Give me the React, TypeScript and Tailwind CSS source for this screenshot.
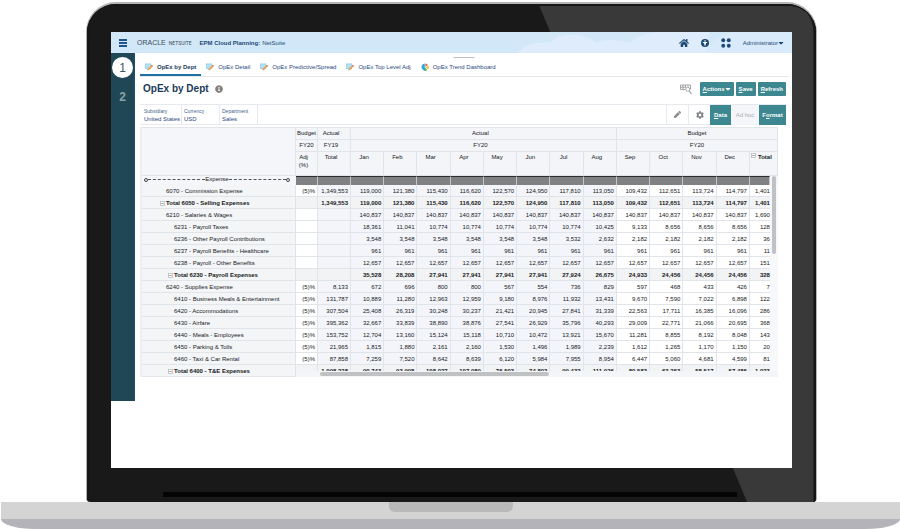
import { useState } from 'react';
import { FaHome, FaCog, FaPen, FaInfoCircle, FaCaretDown } from 'react-icons/fa';

const months = ['Jan', 'Feb', 'Mar', 'Apr', 'May', 'Jun', 'Jul', 'Aug', 'Sep', 'Oct', 'Nov', 'Dec'];

type Row = { label: string; level: number; total?: boolean; adj?: boolean; fy19?: string; values: string };

const rows: Row[] = [
  { label: '6070 - Commission Expense', level: 1, adj: true, fy19: '1,349,553', values: '119,000 121,380 115,430 116,620 122,570 124,950 117,810 113,050 109,432 112,651 113,724 114,797 1,401' },
  { label: 'Total 6050 - Selling Expenses', level: 1, total: true, fy19: '1,349,553', values: '119,000 121,380 115,430 116,620 122,570 124,950 117,810 113,050 109,432 112,651 113,724 114,797 1,401' },
  { label: '6210 - Salaries & Wages', level: 1, values: '140,837 140,837 140,837 140,837 140,837 140,837 140,837 140,837 140,837 140,837 140,837 140,837 1,690' },
  { label: '6231 - Payroll Taxes', level: 2, values: '18,361 11,041 10,774 10,774 10,774 10,774 10,774 10,425 9,133 8,656 8,656 8,656 128' },
  { label: '6236 - Other Payroll Contributions', level: 2, values: '3,548 3,548 3,548 3,548 3,548 3,548 3,532 2,632 2,182 2,182 2,182 2,182 36' },
  { label: '6237 - Payroll Benefits - Healthcare', level: 2, values: '961 961 961 961 961 961 961 961 961 961 961 961 11' },
  { label: '6238 - Payroll - Other Benefits', level: 2, values: '12,657 12,657 12,657 12,657 12,657 12,657 12,657 12,657 12,657 12,657 12,657 12,657 151' },
  { label: 'Total 6230 - Payroll Expenses', level: 2, total: true, values: '35,528 28,208 27,941 27,941 27,941 27,941 27,924 26,675 24,933 24,456 24,456 24,456 328' },
  { label: '6240 - Supplies Expense', level: 1, adj: true, fy19: '8,133', values: '672 696 800 800 567 554 736 829 597 468 433 426 7' },
  { label: '6410 - Business Meals & Entertainment', level: 2, adj: true, fy19: '131,787', values: '10,889 11,280 12,963 12,959 9,180 8,976 11,932 13,431 9,670 7,590 7,022 6,898 122' },
  { label: '6420 - Accommodations', level: 2, adj: true, fy19: '307,504', values: '25,408 26,319 30,248 30,237 21,421 20,945 27,841 31,339 22,563 17,711 16,385 16,096 286' },
  { label: '6430 - Airfare', level: 2, adj: true, fy19: '395,362', values: '32,667 33,839 38,890 38,876 27,541 26,929 35,796 40,293 29,009 22,771 21,066 20,695 368' },
  { label: '6440 - Meals - Employees', level: 2, adj: true, fy19: '153,752', values: '12,704 13,160 15,124 15,118 10,710 10,472 13,921 15,670 11,281 8,855 8,192 8,048 143' },
  { label: '6450 - Parking & Tolls', level: 2, adj: true, fy19: '21,965', values: '1,815 1,880 2,161 2,160 1,530 1,496 1,989 2,239 1,612 1,265 1,170 1,150 20' },
  { label: '6460 - Taxi & Car Rental', level: 2, adj: true, fy19: '87,858', values: '7,259 7,520 8,642 8,639 6,120 5,984 7,955 8,954 6,447 5,060 4,681 4,599 81' },
  { label: 'Total 6400 - T&E Expenses', level: 2, total: true, fy19: '1,098,228', values: '90,743 93,998 108,027 107,989 76,503 74,803 99,432 111,926 80,583 63,253 58,517 57,486 1,023' },
];

const tabs = ['OpEx by Dept', 'OpEx Detail', 'OpEx Predictive/Spread', 'OpEx Top Level Adj', 'OpEx Trend Dashboard'];

const pov = [
  { name: 'Subsidiary', value: 'United States' },
  { name: 'Currency', value: 'USD' },
  { name: 'Department', value: 'Sales' },
];

function FormIcon() {
  return (
    <svg viewBox="0 0 16 16" className="h-2 w-2 shrink-0" aria-hidden="true">
      <rect x="0" y="1" width="12" height="11" fill="#8fd0ec" />
      <path d="M0 4.500h12M0 8h12M4 1v11M8 1v11" stroke="#d8f0fa" strokeWidth="1" />
      <path d="M5 14.500l1-3.500 7-7 2.500 2.500-7 7z" fill="#f0a04b" />
      <path d="M5 14.500l.5-2 1.500 1.500z" fill="#5b6670" />
      <path d="M12 5l1.500-1.500L16 6l-1.500 1.500z" fill="#e0655a" />
    </svg>
  );
}

function DashboardIcon() {
  return (
    <svg viewBox="0 0 16 16" className="h-2 w-2 shrink-0" aria-hidden="true">
      <path d="M7.500 8.500V1a7 7 0 1 0 4.500 12.800z" fill="#2aa7df" />
      <path d="M8.500 7.500V1A6.500 6.500 0 0 1 14 4z" fill="#ef6a3a" />
      <path d="M9 8.500l6-3.500a7 7 0 0 1-1.500 8z" fill="#f7c043" />
      <path d="M7.500 9l4.500 5a7 7 0 0 1-6 1z" fill="#55b272" />
    </svg>
  );
}

function Collapse() {
  return (
    <svg viewBox="0 0 8 8" className="h-[5px] w-[5px] shrink-0" aria-hidden="true">
      <rect x=".75" y=".75" width="6.500" height="6.500" fill="#fff" stroke="#b4b8bd" strokeWidth="1.200" />
      <path d="M2 4h4" stroke="#7f858c" strokeWidth="1.200" />
    </svg>
  );
}

function Header() {
  return (
    <header className="relative flex h-[21px] items-center overflow-hidden bg-[#d2e8f8] px-2 text-[#1d4a75]">
      <svg viewBox="0 0 282 22" preserveAspectRatio="none" className="absolute right-0 top-0 h-full w-[282px]" aria-hidden="true">
        <path d="M8 22C14 12 28 10 40 11C48 0 74 0 86 11C96 7 108 8 120 11C130 2 144 0 156 0H200L196 22z" fill="#dfecfb" />
        <path d="M196 22C200 8 214 0 230 0H282V22z" fill="#d9eafa" />
      </svg>
      <button aria-label="Menu" className="relative flex w-2 flex-col gap-px">
        <span className="h-[2px] bg-[#1d558c]" />
        <span className="h-[2px] bg-[#1d558c]" />
        <span className="h-[2px] bg-[#1d558c]" />
      </button>
      <div className="relative ml-[10px] flex items-center gap-[3px] text-[#3d4b5a]">
        <span className="text-[7px]">ORACLE</span>
        <span className="font-[Roboto] text-[5px]">NETSUITE</span>
      </div>
      <h1 className="relative ml-2 flex gap-[2px]">
        <span className="font-bold">EPM Cloud Planning:</span>
        <span>NetSuite</span>
      </h1>
      <nav className="relative ml-auto flex items-center gap-3">
        <button aria-label="Home"><FaHome className="h-[10px] w-[10px]" /></button>
        <button aria-label="Accessibility">
          <svg viewBox="0 0 16 16" className="h-2 w-2">
            <circle cx="8" cy="8" r="8" fill="#1d4a75" />
            <circle cx="8" cy="4" r="1.600" fill="#fff" />
            <path d="M3.800 6.200h8.400v1.600l-2.400.4V13H8.500v-3h-1v3H6.200V8.200l-2.400-.4z" fill="#fff" />
          </svg>
        </button>
        <button aria-label="Applications">
          <svg viewBox="0 0 18 18" className="h-[10px] w-[10px]" fill="#1d4a75">
            <circle cx="4" cy="4" r="3.500" /><circle cx="14" cy="4" r="3.500" />
            <circle cx="4" cy="14" r="3.500" /><circle cx="14" cy="14" r="3.500" />
          </svg>
        </button>
        <button className="flex items-center">
          Administrator <FaCaretDown className="h-2 w-[6px]" />
        </button>
      </nav>
    </header>
  );
}

function PlanTable() {
  const head = 'border-b border-r border-[#e1e4e8] bg-[#f3f5f8] font-normal';
  return (
    <div className="relative overflow-hidden border-l-2 border-[#eceff2]">
      <table className="w-full table-fixed border-separate border-spacing-0 leading-[11px] text-[#17191c]">
        <colgroup>
          <col className="w-[154px]" />
          <col className="w-[22px]" />
          <col className="w-[33px]" />
          {months.map(m => <col key={m} />)}
          <col className="w-5" />
          <col className="w-2" />
        </colgroup>
        <thead>
          <tr>
            <td rowSpan={3} className="border-b border-r border-t border-[#e1e4e8] bg-[#f4f6f9]" />
            <th className={`${head} border-t`}>Budget</th>
            <th className={`${head} border-t pr-[6px]`}>Actual</th>
            <th colSpan={8} className={`${head} border-t pr-[6px]`}>Actual</th>
            <th colSpan={6} className={`${head} border-t`}>Budget</th>
          </tr>
          <tr>
            <th className={head}>FY20</th>
            <th className={`${head} pr-[6px]`}>FY19</th>
            <th colSpan={8} className={`${head} pr-[6px]`}>FY20</th>
            <th colSpan={6} className={head}>FY20</th>
          </tr>
          <tr className="h-6 align-top leading-[8px]">
            <th className={`${head} pr-[6px] pt-px`}>Adj (%)</th>
            <th className={`${head} pr-[6px] pt-px`}>Total</th>
            {months.map(m => <th key={m} className={`${head} pr-[6px] pt-px`}>{m}</th>)}
            <th colSpan={2} className={`${head} pt-px`}>
              <span className="flex gap-[2px] pl-px font-bold"><Collapse /> Total</span>
            </th>
          </tr>
        </thead>
        <tbody>
          <tr className="leading-[7px]">
            <th className="bg-[#f4f6f9] pb-[2px] pl-[2px] pr-[6px] font-normal">
              <span className="flex items-center">
                <span className="h-1 w-1 rounded-full border border-[#444]" />
                <span className="flex-1 border-t border-dashed border-[#555]" />
                Expense
                <span className="flex-1 border-t border-dashed border-[#555]" />
                <span className="h-1 w-1 rounded-full border border-[#444]" />
              </span>
            </th>
            {Array.from({ length: 15 }, (_, i) => (
              <td key={i} className="border-r border-t border-r-[#c4c6c8] border-t-[#2d2d2d] bg-[#7f8183]" />
            ))}
            <td className="bg-[#f3f5f8]" />
          </tr>
          {rows.map(row => {
            const line = 'border-b border-r border-[#e1e4e8] pr-[2px] pt-[2px] text-right';
            const shade = row.total ? 'bg-[#f2f3f5]' : 'bg-[#f3f5fa]';
            return (
              <tr key={row.label} className={`leading-[9px] ${row.total ? 'font-bold' : ''}`}>
                <th className={`border-b border-r border-[#e1e4e8] bg-[#f3f5f7] pt-[2px] text-left ${row.total ? 'font-bold' : 'font-normal'}`}>
                  <span className={`flex items-center gap-px whitespace-nowrap ${row.level === 1 ? 'pl-[18px]' : 'pl-[26px]'}`}>
                    {row.total ? <Collapse /> : <span className="w-[5px]" />}
                    {row.label}
                  </span>
                </th>
                <td className={`${line} ${row.total ? 'bg-[#f2f3f5]' : 'bg-white'}`}>{row.adj && '(5)%'}</td>
                <td className={`${line} ${shade}`}>{row.fy19}</td>
                {row.values.split(' ').slice(0, 12).map((value, i) => (
                  <td key={i} className={`${line} ${i < 8 || row.total ? shade : 'bg-white'}`}>{value}</td>
                ))}
                <td className={`border-b border-[#e1e4e8] pt-[2px] text-right ${row.total ? shade : 'bg-white'}`}>{row.values.split(' ')[12]}</td>
                <td className="bg-[#f7f8fa]" />
              </tr>
            );
          })}
        </tbody>
      </table>
      <div className="absolute right-[2px] top-[49px] h-[78px] w-1 rounded-full bg-[#bfc1c3]" />
      <div className="absolute bottom-0 left-[154px] right-0 h-[6px] bg-[#f3f5f8] pl-6">
        <div className="mt-px h-1 w-1/2 rounded-full bg-[#bfc1c3]" />
      </div>
    </div>
  );
}

export default function App() {
  const [tab, setTab] = useState(tabs[0]);
  const action = 'flex h-[14px] items-center rounded-[1px] bg-[#3c8790] font-bold text-white';

  return (
    <div className="flex min-h-screen flex-col bg-white pt-[2px] font-['Liberation_Sans',Arial,sans-serif] text-[6px] leading-[8px]">
      <div className="relative ml-[86px] mr-[83px] flex flex-1 flex-col overflow-hidden rounded-b-[4px] rounded-t-[30px] border border-b-0 border-t-2 border-[#b5b5b5] bg-[#191919] px-6 pt-7">
        <svg viewBox="0 0 730 500" preserveAspectRatio="none" className="absolute inset-0 h-full w-full" aria-hidden="true">
          <path d="M453 2H730V500H661z" fill="#393939" />
          <path d="M0 500V30Q0 0 30 0H699Q729 0 729 30V500" fill="none" stroke="#161616" strokeWidth="3" />
        </svg>

        <div className="relative flex flex-1 flex-col bg-white">
          <Header />
          <div className="flex">
            <aside className="flex w-6 flex-col items-center gap-2 border-r border-[#1d4f78] bg-[#1f4755] pt-1">
              <button className="h-[21px] w-[21px] rounded-full bg-white text-[12px] text-[#3a5660]">1</button>
              <button className="h-[21px] w-[21px] text-[12px] font-bold text-[#8ba3aa]">2</button>
            </aside>

            <main className="relative min-w-0 flex-1 pb-6 pl-[5px] text-[#1f4a80]">
              <div className="absolute left-1/2 top-1 h-px w-[21px] -translate-x-1/2 bg-[#b8bfc6]" />
              <nav className="mr-1 flex h-6 items-end border-b border-[#e3e7eb]">
                {tabs.map((name, i) => (
                  <button
                    key={name}
                    onClick={() => setTab(name)}
                    className={`flex items-center gap-1 whitespace-nowrap border-b-2 px-[5px] pb-[3px] pt-[2px] ${
                      tab === name ? 'border-[#1f6fa8] font-bold text-[#173c5c]' : 'border-transparent'
                    }`}
                  >
                    {i === 4 ? <DashboardIcon /> : <FormIcon />}
                    {name}
                  </button>
                ))}
              </nav>

              <div className="mr-[6px] flex h-[27px] items-center gap-[2px] pb-[3px] pl-[3px]">
                <h2 className="text-[10px] font-bold text-[#1b3a57]">OpEx by Dept</h2>
                <FaInfoCircle className="ml-1 h-2 w-2 text-[#83817f]" />
                <button aria-label="Inspect cell" className="ml-auto mr-[6px]">
                  <svg viewBox="0 0 24 22" className="h-[11px] w-3" fill="none" stroke="#999da1" strokeWidth="1.800">
                    <path d="M1 2h20v9M1 2v9h10M1 6.500h11M6 2v9M11 2v5M16 2v3" />
                    <circle cx="15.500" cy="10.500" r="4" fill="#fff" />
                    <path d="M18.500 14l4.500 6" strokeWidth="2.400" />
                  </svg>
                </button>
                <button className={`${action} px-[3px]`}><span><u>A</u>ctions</span> <FaCaretDown className="h-2 w-[6px]" /></button>
                <button className={`${action} px-[3px]`}><span><u>S</u>ave</span></button>
                <button className={`${action} px-[3px]`}><span><u>R</u>efresh</span></button>
              </div>

              <div className="mr-[6px] flex h-[21px] items-stretch border-t border-[#e6e9ed]">
                {pov.map(item => (
                  <div key={item.name} className="flex min-w-[38px] flex-col justify-center border-b border-r border-[#e6e9ed] pl-[2px] first:min-w-[42px] first:pl-1">
                    <span className="text-[5px] text-[#3c5f8d]">{item.name}</span>
                    <span>{item.value}</span>
                  </div>
                ))}
                <div className="flex-1 border-b border-[#e6e9ed]" />
                <button aria-label="Edit" className="flex w-[22px] items-center justify-center border-b border-l border-[#e6e9ed] text-[#86898c]">
                  <FaPen className="h-[7px] w-[7px]" />
                </button>
                <button aria-label="Settings" className="flex w-[22px] items-center justify-center border-b border-l border-[#e6e9ed] text-[#86898c]">
                  <FaCog className="h-2 w-2" />
                </button>
                <button className="w-[21px] bg-[#3c8790] font-bold text-white"><u>D</u>ata</button>
                <button className="w-[28px] bg-[#f4f6f9] text-[#a9adb3]">Ad hoc</button>
                <button className="w-[27px] bg-[#3c8790] font-bold text-white">F<u>o</u>rmat</button>
              </div>

              <div className="mr-[14px] mt-[2px]">
                <PlanTable />
              </div>
            </main>
          </div>
        </div>

        <div className="relative mb-[5px] ml-[52px] mr-[55px] mt-6 h-[5px] bg-[#050505]" />
      </div>

      <div className="ml-px">
        <div className="h-[17px] bg-[#d4d4d4]">
          <div className="mx-auto h-[10px] w-[124px] rounded-b-[6px] bg-[#b9b9b9]" />
        </div>
        <div className="h-[10px] rounded-b-[34px_10px] bg-[#b4b3b9]" />
      </div>
    </div>
  );
}
